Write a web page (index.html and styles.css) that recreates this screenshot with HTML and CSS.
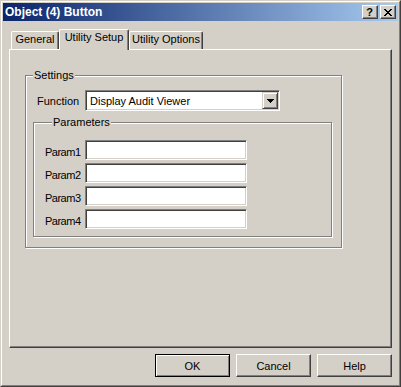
FILE: index.html
```html
<!DOCTYPE html>
<html>
<head>
<meta charset="utf-8">
<link rel="stylesheet" href="styles.css">
</head>
<body>
<div class="window">
  <div class="frame">
    <div class="titlebar">
      <span class="title">Object (4) Button</span>
      <div class="caption-buttons">
        <span class="cbtn help-btn">?</span>
        <span class="cbtn close-btn">
          <svg width="8" height="7" viewBox="0 0 8 7" shape-rendering="crispEdges">
            <rect x="0" y="0" width="2" height="1"/><rect x="6" y="0" width="2" height="1"/>
            <rect x="1" y="1" width="2" height="1"/><rect x="5" y="1" width="2" height="1"/>
            <rect x="2" y="2" width="4" height="1"/>
            <rect x="3" y="3" width="2" height="1"/>
            <rect x="2" y="4" width="4" height="1"/>
            <rect x="1" y="5" width="2" height="1"/><rect x="5" y="5" width="2" height="1"/>
            <rect x="0" y="6" width="2" height="1"/><rect x="6" y="6" width="2" height="1"/>
          </svg>
        </span>
      </div>
    </div>
    <div class="content">
      <div class="tabs">
        <div class="tab tab-general">General</div>
        <div class="tab tab-active">Utility Setup</div>
        <div class="tab tab-options">Utility Options</div>
      </div>
      <div class="panel">
        <fieldset class="group settings">
          <legend>Settings</legend>
          <div class="function-row">
            <span class="label">Function</span>
            <div class="combo">
              <span class="combo-text">Display Audit Viewer</span>
              <span class="combo-btn">
                <svg width="7" height="4" viewBox="0 0 7 4" shape-rendering="crispEdges">
                  <rect x="0" y="0" width="7" height="1"/>
                  <rect x="1" y="1" width="5" height="1"/>
                  <rect x="2" y="2" width="3" height="1"/>
                  <rect x="3" y="3" width="1" height="1"/>
                </svg>
              </span>
            </div>
          </div>
          <fieldset class="group params">
            <legend>Parameters</legend>
            <div class="param-grid">
              <span class="plabel">Param1</span><input class="field" type="text">
              <span class="plabel">Param2</span><input class="field" type="text">
              <span class="plabel">Param3</span><input class="field" type="text">
              <span class="plabel">Param4</span><input class="field" type="text">
            </div>
          </fieldset>
        </fieldset>
      </div>
      <div class="buttons">
        <button class="btn btn-default">OK</button>
        <button class="btn">Cancel</button>
        <button class="btn">Help</button>
      </div>
    </div>
  </div>
</div>
</body>
</html>
```
FILE: styles.css
```css
* { box-sizing: border-box; }
html, body { margin: 0; padding: 0; }
body {
  background: #D4D0C8;
  font-family: "Liberation Sans", Arial, sans-serif;
  font-size: 11px;
  color: #000;
}
.window {
  width: 401px;
  height: 387px;
  border: 1px solid;
  border-color: #D4D0C8 #404040 #404040 #D4D0C8;
  background: #D4D0C8;
}
.frame {
  height: 100%;
  border: 1px solid;
  border-color: #fff #808080 #808080 #fff;
  padding: 1px;
  display: flex;
  flex-direction: column;
}
.titlebar {
  height: 18px;
  flex: none;
  background: linear-gradient(to right, #0A246A, #A6CAF0);
  display: flex;
  align-items: center;
  justify-content: space-between;
  padding: 0 2px;
}
.title {
  color: #fff;
  font-weight: bold;
  font-size: 12px;
  line-height: 14px;
}
.caption-buttons { display: flex; gap: 2px; }
.cbtn {
  width: 16px;
  height: 14px;
  background: #D4D0C8;
  border: 1px solid;
  border-color: #fff #404040 #404040 #fff;
  box-shadow: inset -1px -1px #808080;
  display: flex;
  align-items: center;
  justify-content: center;
}
.help-btn {
  font-weight: bold;
  font-size: 11px;
  line-height: 12px;
  padding-right: 1px;
}
.close-btn svg { fill: #000; display: block; margin-right: 1px; }
.content {
  flex: 1;
  display: flex;
  flex-direction: column;
  padding: 8px 6px 7px 6px;
}
.tabs {
  display: flex;
  align-items: flex-end;
  height: 20px;
  padding-left: 2px;
  flex: none;
}
.tab {
  height: 18px;
  border-top: 1px solid #fff;
  border-left: 1px solid #fff;
  border-right: 1px solid #404040;
  border-radius: 2px 2px 0 0;
  box-shadow: inset -1px 0 #808080;
  text-align: center;
  padding-top: 1px;
  line-height: 13px;
  background: #D4D0C8;
  white-space: nowrap;
}
.tab-general { width: 48px; }
.tab-active {
  width: 70px;
  height: 21px;
  margin-bottom: -1px;
  position: relative;
  z-index: 1;
}
.tab-options { width: 74px; }
.panel {
  height: 299px;
  flex: none;
  border: 1px solid;
  border-color: #fff #404040 #404040 #fff;
  box-shadow: inset -1px -1px #808080;
  padding: 19px 0 0 15px;
}
.group {
  margin: 0;
  padding: 0;
  border: 1px solid #808080;
  box-shadow: inset 1px 1px #fff, 1px 1px #fff;
  min-width: 0;
}
.group legend {
  margin-left: 7px;
  padding: 0 1px;
  line-height: 13px;
  background: #D4D0C8;
}
.settings {
  width: 317px;
  padding-bottom: 10px;
}
.function-row {
  display: grid;
  grid-template-columns: 48px 195px;
  align-items: center;
  margin: 8px 0 0 11px;
}
.combo {
  height: 21px;
  border: 1px solid;
  border-color: #808080 #fff #fff #808080;
  box-shadow: inset 1px 1px #404040, inset -1px -1px #D4D0C8;
  background: #fff;
  padding: 1px;
  display: flex;
  align-items: center;
}
.combo-text { flex: 1; padding-left: 3px; white-space: nowrap; }
.combo-btn {
  width: 16px;
  height: 17px;
  background: #D4D0C8;
  border: 1px solid;
  border-color: #D4D0C8 #404040 #404040 #D4D0C8;
  box-shadow: inset 1px 1px #fff, inset -1px -1px #808080;
  display: flex;
  align-items: center;
  justify-content: center;
}
.combo-btn svg { fill: #000; display: block; }
.params {
  width: 299px;
  margin: 5px 0 0 7px;
  padding: 11px 0 7px 11px;
}
.param-grid {
  display: grid;
  grid-template-columns: 40px 162px;
  grid-auto-rows: 20px;
  row-gap: 3px;
  align-items: center;
}
.plabel { padding-top: 3px; letter-spacing: -0.5px; white-space: nowrap; }
.field {
  height: 20px;
  width: 162px;
  margin: 0;
  border: 1px solid;
  border-color: #808080 #fff #fff #808080;
  box-shadow: inset 1px 1px #404040, inset -1px -1px #D4D0C8;
  background: #fff;
  padding: 0 3px;
  font: inherit;
  outline: none;
}
.buttons {
  display: flex;
  justify-content: flex-end;
  gap: 6px;
  margin-top: 6px;
  flex: none;
}
.btn {
  width: 75px;
  height: 23px;
  margin: 0;
  padding: 0;
  background: #D4D0C8;
  border: 1px solid;
  border-color: #fff #404040 #404040 #fff;
  box-shadow: inset -1px -1px #808080;
  font: inherit;
  color: #000;
}
.btn-default {
  border: 1px solid #000;
  box-shadow: inset 1px 1px #fff, inset -1px -1px #808080;
}
```
